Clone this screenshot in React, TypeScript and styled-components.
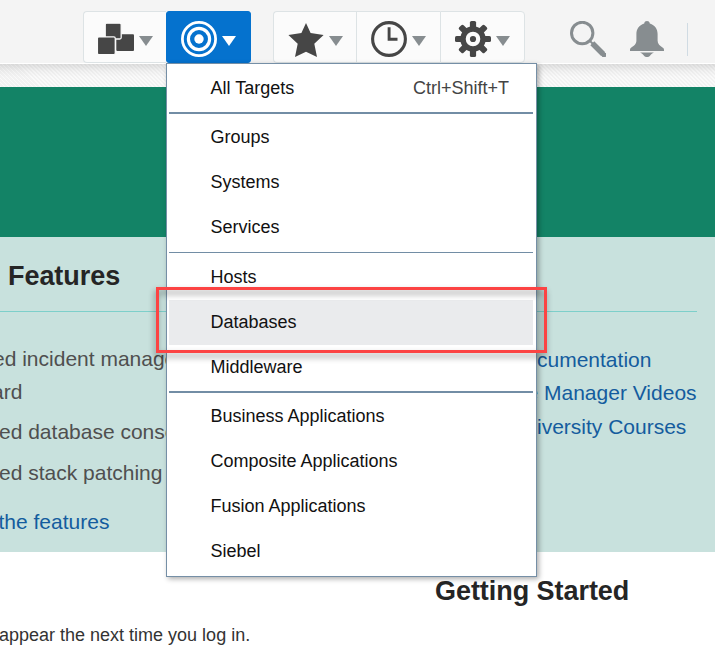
import React from "react";
import styled, { createGlobalStyle, css } from "styled-components";

const GlobalStyle = createGlobalStyle`
  * { box-sizing: border-box; }
  body {
    margin: 0;
    background: #fff;
    font-family: "Liberation Sans", Arial, sans-serif;
    overflow: hidden;
  }
`;

const Page = styled.div`
  position: relative;
  width: 715px;
  height: 647px;
  overflow: hidden;
  display: flex;
  flex-direction: column;
`;

const Header = styled.header`
  height: 64px;
  flex: none;
  display: flex;
  align-items: flex-start;
  padding: 11px 0 0 83px;
  background: #f4f4f4;
  border-bottom: 1px solid #fff;
`;

const ButtonGroup = styled.div`
  display: flex;
  margin-right: 22px;
`;

const ToolButton = styled.button<{ $active?: boolean; $first?: boolean; $last?: boolean; $width: number }>`
  width: ${(p) => p.$width}px;
  height: 52px;
  display: flex;
  align-items: flex-start;
  gap: 5px;
  padding: 9px 0 0 14px;
  color: #464646;
  background: #fbfbfb;
  border: 1px solid #dde3e5;
  border-right-width: ${(p) => (p.$last ? 1 : 0)}px;
  border-radius: ${(p) => (p.$first ? 4 : 0)}px ${(p) => (p.$last ? 4 : 0)}px ${(p) => (p.$last ? 4 : 0)}px
    ${(p) => (p.$first ? 4 : 0)}px;
  ${(p) =>
    p.$active &&
    css`
      color: #fff;
      background: #0572ce;
      border-color: #0572ce;
      border-radius: 3px;
    `}
`;

const Glyph = styled.svg`
  display: block;
  flex: none;
`;

const Caret = styled.span<{ $active?: boolean }>`
  margin-top: 15px;
  border: 7px solid transparent;
  border-top: 10px solid ${(p) => (p.$active ? "#fff" : "#878d90")};
  border-bottom: 0;
`;

const HeaderTools = styled.div`
  display: flex;
  color: #878d90;
  padding: 10px 0 0 23px;
  gap: 24px;
`;

const HeaderDivider = styled.span`
  width: 1px;
  height: 33px;
  margin-top: 2px;
  margin-left: -1px;
  background: #d0dbe3;
`;

const Hatch = styled.div`
  height: 23px;
  flex: none;
  background: linear-gradient(rgba(0, 0, 0, 0.11), rgba(0, 0, 0, 0.03) 7px, transparent 13px),
    repeating-linear-gradient(45deg, #fafafa 0 1.4px, #f2f2f2 1.4px 2.83px);
`;

const Banner = styled.div`
  height: 150px;
  flex: none;
  background: #138366;
`;

const Panel = styled.section`
  height: 315px;
  flex: none;
  display: grid;
  grid-template-columns: 526px 1fr;
  grid-template-rows: 75px 1fr;
  background: #c8e1dd;
`;

const PanelHead = styled.div`
  grid-column: 1 / 3;
  width: 697px;
  padding: 24px 0 0 8px;
  border-bottom: 1px solid #7dcfca;
`;

const Heading = styled.h2`
  margin: 0;
  font-size: 27px;
  line-height: 31px;
  font-weight: 700;
  letter-spacing: -0.05px;
  color: #252525;
`;

const FeatureList = styled.div`
  display: flex;
  flex-direction: column;
  padding-top: 35px;
`;

const Feature = styled.p<{ $gap: number; $shift?: number }>`
  margin: 0 0 ${(p) => p.$gap}px ${(p) => p.$shift ?? 0}px;
  font-size: 21px;
  line-height: 24px;
  color: #4f4f4f;
  white-space: nowrap;
`;

const Link = styled.a<{ $shift?: number }>`
  margin-left: ${(p) => p.$shift ?? 0}px;
  font-size: 21px;
  line-height: 24px;
  color: #145c9e;
  white-space: pre;
`;

const ResourceList = styled.div`
  display: flex;
  flex-direction: column;
  gap: 9.4px;
  padding-top: 36px;
`;

const Footer = styled.section`
  flex: 1;
  padding: 24px 0 0;
`;

const StartHeading = styled(Heading)`
  margin-left: 435px;
`;

const Note = styled.p`
  margin: 18px 0 0 -1px;
  font-size: 18px;
  line-height: 21px;
  color: #333;
`;

const Menu = styled.nav`
  position: absolute;
  left: 166px;
  top: 63px;
  width: 371px;
  height: 514px;
  padding: 2px;
  border: 1px solid #758fa6;
  background: #fff;
  box-shadow: 2px 2px 5px rgba(0, 0, 0, 0.32);
`;

const MenuItem = styled.div<{ $selected?: boolean }>`
  height: 45px;
  display: flex;
  justify-content: space-between;
  margin-right: 1px;
  padding: 0 24px 0 41.5px;
  font-size: 18px;
  line-height: 44px;
  color: #111;
  background: ${(p) => (p.$selected ? "#eaebed" : "transparent")};
`;

const Shortcut = styled.span`
  color: #444;
`;

const Separator = styled.hr<{ $thin?: boolean }>`
  height: ${(p) => (p.$thin ? 1 : 2)}px;
  margin: ${(p) => (p.$thin ? 2 : 1)}px 1px ${(p) => (p.$thin ? 2 : 1)}px 0;
  border: 0;
  background: #728da5;
`;

const Callout = styled.div`
  position: absolute;
  left: 156px;
  top: 287px;
  width: 391px;
  height: 66px;
  border: 3px solid #fc4343;
  filter: drop-shadow(-1px 4px 3px rgba(0, 0, 0, 0.42));
`;

const TargetsIcon = () => (
  <Glyph width="36" height="36" viewBox="0 0 36 36" fill="none" stroke="currentColor">
    <circle cx="18" cy="18" r="16.6" strokeWidth="2.8" />
    <circle cx="18" cy="18" r="10.6" strokeWidth="3.2" />
    <circle cx="18" cy="18" r="4.7" fill="currentColor" stroke="none" />
  </Glyph>
);

const EnterpriseIcon = () => (
  <Glyph width="36" height="36" viewBox="0 0 36 36" fill="currentColor">
    <rect x="18.3" y="13.3" width="17.7" height="16.6" rx="1" />
    <rect x="7.2" y="2.2" width="16" height="15.8" rx="1.5" stroke="#fbfbfb" strokeWidth="1.3" />
    <rect x="-0.6" y="15.9" width="17.9" height="17.7" rx="1.5" stroke="#fbfbfb" strokeWidth="1.3" />
  </Glyph>
);

const StarIcon = () => (
  <Glyph width="36" height="36" viewBox="0 0 36 36" fill="currentColor">
    <path d="M18 2l4.6 10L35.6 14l-9.3 8.7 2.7 13.3L18 30.8 7 36l2.7-13.3L.4 14l13-2z" />
  </Glyph>
);

const ClockIcon = () => (
  <Glyph width="36" height="36" viewBox="0 0 36 36" fill="none" stroke="currentColor">
    <circle cx="18" cy="18" r="16.4" strokeWidth="3.1" />
    <path d="M18.1 6.2V18.2H26.5" strokeWidth="2.9" />
  </Glyph>
);

const GearIcon = () => (
  <Glyph width="36" height="36" viewBox="0 0 36 36" fill="currentColor">
    <circle cx="18" cy="18" r="10" fill="none" stroke="currentColor" strokeWidth="5.4" />
    <circle cx="18" cy="18" r="3.1" />
    {[0, 45, 90, 135, 180, 225, 270, 315].map((angle) => (
      <rect
        key={angle}
        x="14.9"
        y="0"
        width="6.2"
        height="8"
        rx="1.6"
        transform={`rotate(${angle} 18 18)`}
      />
    ))}
  </Glyph>
);

const SearchIcon = () => (
  <Glyph width="36" height="36" viewBox="0 0 36 36" fill="none" stroke="currentColor">
    <circle cx="12.2" cy="12" r="10.7" strokeWidth="3" />
    <path d="M19.6 19.6l3.2 3.2" strokeWidth="2" />
    <path d="M22.3 22.3l11 11" strokeWidth="5.6" />
    <path d="M32 33.8h4M33.8 32l.2 4" strokeWidth="3.6" />
  </Glyph>
);

const BellIcon = () => (
  <Glyph width="34" height="36" viewBox="0 0 34 36" fill="currentColor">
    <path d="M14.2 2.5C14.4-.8 19.6-.8 19.8 2.5 25 4.2 27.6 8 27.6 13v6.5c0 3.5 2.1 5.2 5.6 7.4.8.5.8 1.4.8 3.1H0c0-1.7 0-2.6.8-3.1 3.5-2.2 5.6-3.9 5.6-7.4V13c0-5 2.6-8.8 7.8-10.5z" />
    <path d="M10 31.6h14c-1.4.8-2.9 1.7-3.8 2.8-1.7 2.1-4.7 2.1-6.4 0-.9-1.1-2.4-2-3.8-2.8z" />
  </Glyph>
);

export default function App() {
  return (
    <>
      <GlobalStyle />
      <Page>
        <Header>
          <ButtonGroup>
            <ToolButton $width={83} $first aria-label="Enterprise">
              <EnterpriseIcon />
              <Caret />
            </ToolButton>
            <ToolButton $width={85} $active $last aria-label="Targets">
              <TargetsIcon />
              <Caret $active />
            </ToolButton>
          </ButtonGroup>
          <ButtonGroup>
            <ToolButton $width={83} $first aria-label="Favorites">
              <StarIcon />
              <Caret />
            </ToolButton>
            <ToolButton $width={84} aria-label="History">
              <ClockIcon />
              <Caret />
            </ToolButton>
            <ToolButton $width={85} $last aria-label="Setup">
              <GearIcon />
              <Caret />
            </ToolButton>
          </ButtonGroup>
          <HeaderTools>
            <SearchIcon />
            <BellIcon />
            <HeaderDivider />
          </HeaderTools>
        </Header>
        <Hatch />
        <Banner />
        <Panel>
          <PanelHead>
            <Heading>Features</Heading>
          </PanelHead>
          <FeatureList>
            <Feature $gap={9} $shift={-7}>ed incident manage</Feature>
            <Feature $gap={16} $shift={-8}>ard</Feature>
            <Feature $gap={17} $shift={-1}>ed database conso</Feature>
            <Feature $gap={25} $shift={-1}>ed stack patching</Feature>
            <Link $shift={-1.5}>the features</Link>
          </FeatureList>
          <ResourceList>
            <Link $shift={11}>cumentation</Link>
            <Link $shift={0.5}>e Manager Videos</Link>
            <Link $shift={11}>iversity Courses</Link>
          </ResourceList>
        </Panel>
        <Footer>
          <StartHeading>Getting Started</StartHeading>
          <Note>appear the next time you log in.</Note>
        </Footer>
        <Menu>
          <MenuItem>
            All Targets<Shortcut>Ctrl+Shift+T</Shortcut>
          </MenuItem>
          <Separator />
          <MenuItem>Groups</MenuItem>
          <MenuItem>Systems</MenuItem>
          <MenuItem>Services</MenuItem>
          <Separator $thin />
          <MenuItem>Hosts</MenuItem>
          <MenuItem $selected>Databases</MenuItem>
          <MenuItem>Middleware</MenuItem>
          <Separator />
          <MenuItem>Business Applications</MenuItem>
          <MenuItem>Composite Applications</MenuItem>
          <MenuItem>Fusion Applications</MenuItem>
          <MenuItem>Siebel</MenuItem>
        </Menu>
        <Callout />
      </Page>
    </>
  );
}
